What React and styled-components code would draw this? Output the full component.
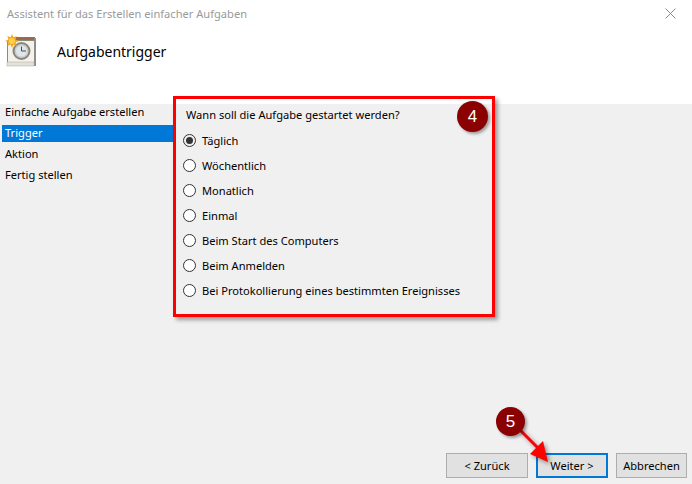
import React from "react";
import styled, { createGlobalStyle } from "styled-components";

const Global = createGlobalStyle`
  html, body { margin: 0; padding: 0; background: #f0f0f0; }
  body { width: 692px; height: 484px; overflow: hidden; font-family: "Noto Sans", "Open Sans", sans-serif; }
  * { box-sizing: border-box; }
`;

const Dialog = styled.div`
  position: relative;
  width: 692px;
  height: 484px;
  display: flex;
  flex-direction: column;
  background: #f0f0f0;
  color: #000;
  font-size: 11.1px;
`;
const Header = styled.header`
  height: 104px;
  flex: none;
  background: #fff;
  display: flex;
  flex-direction: column;
`;
const TitleBar = styled.div`
  height: 29px;
  padding: 0 16px 2px 7px;
  display: flex;
  align-items: center;
  justify-content: space-between;
  color: #9a9a9a;
  font-size: 11.1px;
`;
const HeadingRow = styled.div`
  display: flex;
  align-items: center;
  gap: 20px;
  padding: 5px 0 0 4px;
`;
const Heading = styled.h1`
  margin: 2px 0 0;
  font-size: 14px;
  font-weight: 400;
  color: #000;
`;
const Body = styled.main`
  flex: 1;
  display: flex;
  align-items: flex-start;
  min-height: 0;
`;
const Sidebar = styled.nav`
  width: 173px;
  flex: none;
  padding: 0 0 0 2px;
  display: flex;
  flex-direction: column;
  gap: 4px;
`;
const NavItem = styled.div`
  height: 17px;
  line-height: 16px;
  padding-left: 3px;
  white-space: nowrap;
  background: ${(p) => (p.$active ? "#0078d7" : "transparent")};
  color: ${(p) => (p.$active ? "#fff" : "#000")};
`;
const Panel = styled.section`
  width: 322px;
  height: 221px;
  margin-top: -8px;
  border: 3px solid #f00;
  box-shadow: 3px 3px 4px rgba(0, 0, 0, 0.35);
  padding: 7px 0 0 10px;
  position: relative;
  z-index: 1;
`;
const Question = styled.div`
  height: 17px;
  line-height: 17px;
  margin-bottom: 5px;
`;
const Options = styled.div`
  display: flex;
  flex-direction: column;
  margin-left: -3px;
`;
const Option = styled.label`
  height: 25px;
  display: flex;
  align-items: center;
  gap: 6px;
`;
const Radio = styled.span`
  width: 13px;
  height: 13px;
  flex: none;
  border-radius: 50%;
  border: 1px solid #333;
  background: ${(p) => (p.$checked ? "#f0f0f0" : "#fff")};
  display: flex;
  align-items: center;
  justify-content: center;
  &::after {
    content: "";
    width: 7px;
    height: 7px;
    border-radius: 50%;
    background: ${(p) => (p.$checked ? "#333" : "transparent")};
  }
`;
const Footer = styled.footer`
  height: 28px;
  flex: none;
  display: flex;
  justify-content: flex-end;
  padding-right: 5px;
  position: absolute;
  left: 0;
  right: 0;
  bottom: 3px;
`;
const Button = styled.button`
  width: ${(p) => p.$w}px;
  height: 25px;
  margin-left: ${(p) => p.$gap}px;
  padding: 0;
  background: #e1e1e1;
  border: ${(p) => (p.$primary ? "2px solid #0078d7" : "1px solid #adadad")};
  font: inherit;
  color: #000;
`;
const Callout = styled.div`
  position: absolute;
  left: ${(p) => p.$x}px;
  top: ${(p) => p.$y}px;
  width: ${(p) => p.$d}px;
  height: ${(p) => p.$d}px;
  border-radius: 50%;
  background: #8b0000;
  color: #fff;
  font-size: 17px;
  font-family: "Liberation Sans", sans-serif;
  display: flex;
  align-items: center;
  justify-content: center;
  box-shadow: 2px 2px 3px rgba(0, 0, 0, 0.35);
  z-index: 3;
`;
const ArrowSvg = styled.svg`
  position: absolute;
  left: 510px;
  top: 420px;
  width: 50px;
  height: 50px;
  z-index: 2;
  filter: drop-shadow(2px 2px 2px rgba(0, 0, 0, 0.4));
`;

const TaskIcon = () => (
  <svg width="33" height="33" viewBox="0 0 33 33">
    <rect x="3.5" y="6.5" width="27" height="25" fill="#f4f2ea" stroke="#8a8a80" />
    <rect x="9" y="3" width="22" height="3" fill="#9a6a4c" />
    <rect x="30" y="4" width="2" height="28" fill="#8f8f88" />
    <rect x="3" y="28" width="27" height="4" fill="#e4e2d8" stroke="#a8a8a0" strokeWidth="0.5" />
    <circle cx="17.5" cy="17" r="8" fill="#c6cdd2" stroke="#8b8676" strokeWidth="2" />
    <circle cx="17.5" cy="17" r="5.5" fill="#dfe6ea" />
    <path d="M17.5 12.5V17H22" fill="none" stroke="#4c4c48" strokeWidth="1" />
    <path
      d="M8 0l1.4 3.3L12.8 2l-1.3 3.4L15 7l-3.5 1.5 1.3 3.4-3.4-1.3L8 14l-1.4-3.4-3.4 1.3 1.3-3.4L1 7l3.5-1.6L3.2 2l3.4 1.3z"
      fill="#f6a81c"
    />
    <circle cx="8" cy="7" r="3" fill="#ffd24a" />
  </svg>
);

const CloseIcon = () => (
  <svg width="11" height="11" viewBox="0 0 11 11">
    <path d="M.5.5l10 10M10.5.5l-10 10" stroke="#8a8a8a" strokeWidth="1" fill="none" />
  </svg>
);

const options = [
  "Täglich",
  "Wöchentlich",
  "Monatlich",
  "Einmal",
  "Beim Start des Computers",
  "Beim Anmelden",
  "Bei Protokollierung eines bestimmten Ereignisses",
];
const steps = ["Einfache Aufgabe erstellen", "Trigger", "Aktion", "Fertig stellen"];

export default function App() {
  return (
    <>
      <Global />
      <Dialog>
        <Header>
          <TitleBar>
            <span>Assistent für das Erstellen einfacher Aufgaben</span>
            <CloseIcon />
          </TitleBar>
          <HeadingRow>
            <TaskIcon />
            <Heading>Aufgabentrigger</Heading>
          </HeadingRow>
        </Header>
        <Body>
          <Sidebar>
            {steps.map((s) => (
              <NavItem key={s} $active={s === "Trigger"}>{s}</NavItem>
            ))}
          </Sidebar>
          <Panel>
            <Question>Wann soll die Aufgabe gestartet werden?</Question>
            <Options>
              {options.map((o, i) => (
                <Option key={o}>
                  <Radio $checked={i === 0} />
                  {o}
                </Option>
              ))}
            </Options>
          </Panel>
        </Body>
        <Footer>
          <Button $w={82}>&lt; Zurück</Button>
          <Button $w={72} $gap={8} $primary>Weiter &gt;</Button>
          <Button $w={71} $gap={8}>Abbrechen</Button>
        </Footer>
        <Callout $x={457} $y={101} $d={31}>4</Callout>
        <Callout $x={496} $y={407} $d={29}>5</Callout>
        <ArrowSvg viewBox="0 0 50 50">
          <path d="M9 9L28 28" stroke="#f00" strokeWidth="3" fill="none" />
          <path d="M38 42L20 34L33 21z" fill="#f00" />
        </ArrowSvg>
      </Dialog>
    </>
  );
}
